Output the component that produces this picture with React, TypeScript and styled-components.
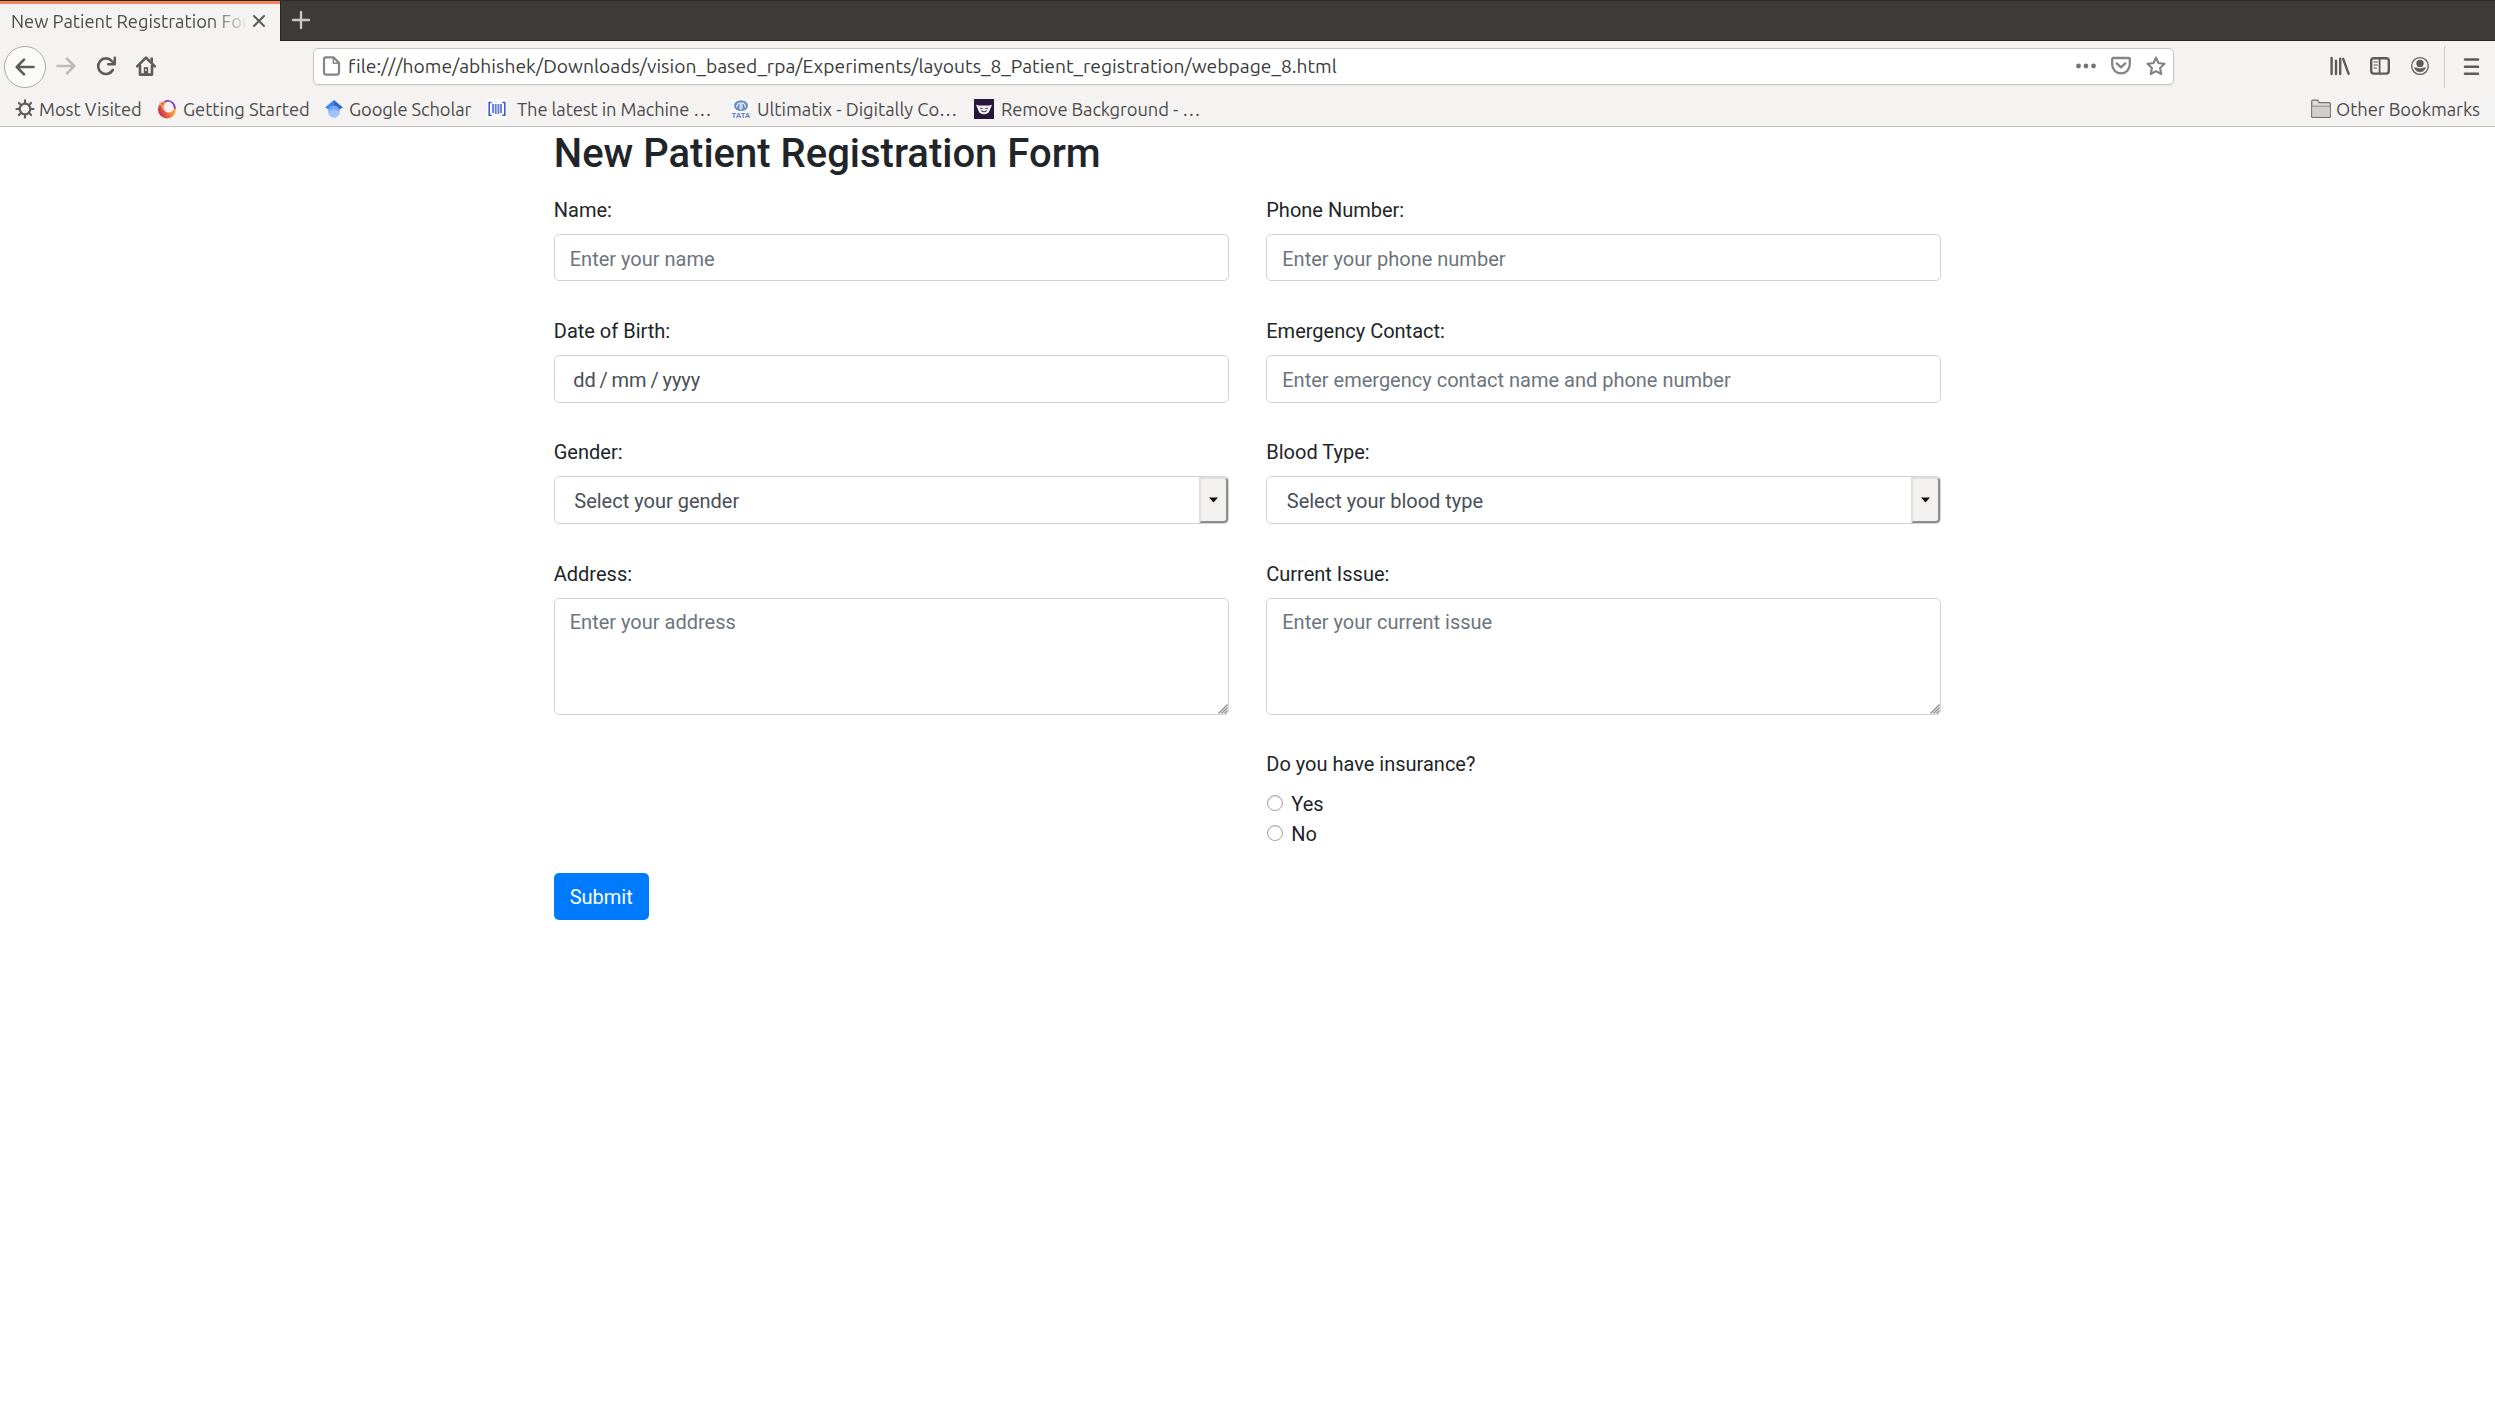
import React from "react";
import styled, { createGlobalStyle } from "styled-components";

const GlobalStyle = createGlobalStyle`
  *, *::before, *::after { box-sizing: border-box; }
  body { margin: 0; background: #fff; color: #212529; font-family: Roboto, sans-serif; font-size: 20px; line-height: 30px; }
`;

const Chrome = styled.header`
  height: 127px;
  display: flex;
  flex-direction: column;
  background: #f4f3f2;
  border-bottom: 1px solid #c6c2be;
  font-family: Ubuntu, "Noto Sans", sans-serif;
  font-size: 18.33px;
  line-height: 24px;
  color: #4c4c4c;
  white-space: nowrap;
`;
const TabStrip = styled.div`
  height: 41px;
  flex: none;
  display: flex;
  background: #3c3b37;
  border-top: 1px solid #2b2a27;
`;
const Tab = styled.div`
  width: 280px;
  display: flex;
  align-items: center;
  padding: 0 14px 4px 11px;
  border-top: 3px solid #f4835d;
  background: #f4f3f2;
`;
const TabTitle = styled.span`
  width: 235px;
  overflow: hidden;
  mask-image: linear-gradient(to right, #000 200px, transparent 237px);
`;
const TabRest = styled.div`
  flex: 1;
  display: flex;
  align-items: center;
  padding: 0 0 1px 10px;
  border-left: 1px solid #262522;
  border-bottom: 1px solid #262522;
`;
const NavBar = styled.div`
  height: 51px;
  flex: none;
  display: flex;
  align-items: center;
  padding: 0 15px 0 4px;
`;
const BackButton = styled.div`
  width: 42px;
  height: 42px;
  margin-right: 10px;
  display: flex;
  align-items: center;
  justify-content: center;
  border: 1px solid #adaba8;
  border-radius: 50%;
  background: #fafaf9;
`;
const NavIcon = styled.div<{ $gap?: number }>`
  display: flex;
  width: 20px;
  height: 20px;
  flex: none;
  margin: 0 ${(p) => p.$gap ?? 0}px 1px 0;
`;
const UrlBar = styled.div`
  width: 1861px;
  height: 37px;
  display: flex;
  align-items: center;
  padding: 0 7px 0 8px;
  border: 1px solid #c8c4c0;
  border-radius: 5px;
  background: #fff;
  box-shadow: 0 1px 2px rgba(0, 0, 0, 0.06);
`;
const UrlText = styled.span`
  flex: 1;
  padding-bottom: 1px;
  font-size: 19.25px;
  line-height: 26px;
  letter-spacing: 0.018px;
  color: #3b3b3b;
  margin-left: 6px;
`;
const Divider = styled.div`
  width: 1px;
  height: 42px;
  background: #cfccc9;
  margin-right: 18px;
`;
const Bookmarks = styled.div`
  height: 34px;
  display: flex;
  align-items: center;
  padding: 0 15px;
`;
const Bookmark = styled.div<{ $width: number; $gap: number; $spacing: number }>`
  width: ${(p) => p.$width}px;
  display: flex;
  align-items: center;
  gap: ${(p) => p.$gap}px;
  letter-spacing: ${(p) => p.$spacing}px;
  flex: none;
  svg { flex: none; }
`;
const Spacer = styled.div`flex: 1;`;

const Container = styled.main`
  width: 1425px;
  margin: 0 auto;
  padding: 3px 18.75px 0;
`;
const Title = styled.h2`
  margin: 0 0 15.8px;
  font-size: 40px;
  font-weight: 500;
  line-height: 48px;
`;
const Columns = styled.div`
  display: grid;
  grid-template-columns: 1fr 1fr;
  column-gap: 37.5px;
`;
const Field = styled.div`
  margin-bottom: 33.75px;
`;
const Label = styled.label`
  display: block;
  height: 30px;
  padding-top: 1px;
  margin-bottom: 10px;
`;
const Question = styled.div`
  height: 30px;
  margin-bottom: 10px;
`;
const Control = styled.div<{ $inset?: number }>`
  height: 47.5px;
  display: flex;
  align-items: center;
  padding: 2px 0 0 ${(p) => p.$inset ?? 15}px;
  border: 1px solid #ced4da;
  border-radius: 5px;
  color: #495057;
`;
const TextInput = styled.input`
  width: 675px;
  height: 47.5px;
  display: block;
  margin: 0;
  padding: 2.5px 15px 0;
  border: 1px solid #ced4da;
  border-radius: 5px;
  font: inherit;
  outline: none;
  &::placeholder { color: #6c757d; opacity: 1; }
`;
const AreaWrap = styled.div`
  position: relative;
  height: 117.5px;
`;
const Area = styled.textarea`
  width: 675px;
  height: 117.5px;
  display: block;
  margin: 0;
  padding: 8.5px 15px;
  border: 1px solid #ced4da;
  border-radius: 5px;
  font: inherit;
  resize: none;
  outline: none;
  &::placeholder { color: #6c757d; opacity: 1; }
`;
const Grip = styled.svg`
  position: absolute;
  right: 1px;
  bottom: 1px;
`;
const DateText = styled.span`word-spacing: -1.2px;`;
const SelectText = styled.span`flex: 1;`;
const SelectButton = styled.div`
  width: 29px;
  height: 46px;
  margin-top: -2px;
  display: flex;
  align-items: center;
  justify-content: center;
  background: #f2f1f0;
  border: 2px solid;
  border-color: #dfdfde #8f8f8e #8f8f8e #dfdfde;
  border-radius: 0 4px 4px 0;
`;
const RadioRow = styled.label`
  height: 30px;
  display: flex;
  align-items: center;
`;
const RadioMark = styled.span`
  width: 16px;
  height: 16px;
  margin: 0 8px 2px 1px;
  border: 1px solid #a3a3a3;
  border-radius: 50%;
  box-shadow: inset 0 1px 1px rgba(0, 0, 0, 0.12);
`;
const Submit = styled.button`
  width: 95px;
  height: 47px;
  margin: 24px 0 0;
  padding: 2px 0 0;
  display: block;
  border: 0;
  border-radius: 5px;
  background: #007bff;
  color: #fff;
  font: inherit;
`;

const DARK = "#5c5c5b";
const SOFT = "#858585";
const line = (color: string, w = 2.6) => ({
  fill: "none", stroke: color, strokeWidth: w, strokeLinecap: "round" as const, strokeLinejoin: "round" as const,
});

function TextField({ label, hint }: { label: string; hint: string }) {
  return <Field><Label>{label}</Label><TextInput placeholder={hint} /></Field>;
}
function SelectField({ label, value }: { label: string; value: string }) {
  return (
    <Field>
      <Label>{label}</Label>
      <Control $inset={19.5}>
        <SelectText>{value}</SelectText>
        <SelectButton>
          <svg width="9" height="6" viewBox="0 0 9 6"><path d="M0 0.5H9L4.5 5.5Z" fill="#111" /></svg>
        </SelectButton>
      </Control>
    </Field>
  );
}
function AreaField({ label, hint }: { label: string; hint: string }) {
  return (
    <Field>
      <Label>{label}</Label>
      <AreaWrap>
        <Area placeholder={hint} />
        <Grip width="10" height="10" viewBox="0 0 10 10">
          <path d="M0.5 9.5 9.5 0.5M3.5 9.5 9.5 3.5M6.5 9.5 9.5 6.5" stroke="#8a8a8a" strokeWidth="1.3" />
        </Grip>
      </AreaWrap>
    </Field>
  );
}

function BrowserChrome() {
  return (
    <Chrome>
      <TabStrip>
        <Tab>
          <TabTitle>New Patient Registration Form</TabTitle>
          <Spacer />
          <svg width="14" height="14" viewBox="0 0 14 14"><path d="M2 2 12 12M12 2 2 12" {...line("#5c5c5b", 2)} /></svg>
        </Tab>
        <TabRest>
          <svg width="20" height="20" viewBox="0 0 20 20"><path d="M10 2V18M2 10H18" {...line("#cac6c1", 2.4)} /></svg>
        </TabRest>
      </TabStrip>
      <NavBar>
        <BackButton>
          <svg width="20" height="20" viewBox="0 0 20 20"><path d="M18.5 10H2M9 2.7 1.8 10 9 17.3" {...line(DARK)} /></svg>
        </BackButton>
        <NavIcon $gap={20}>
          <svg width="20" height="20" viewBox="0 0 20 20"><path d="M1.5 10H18M11 2.7 18.2 10 11 17.3" {...line("#bcbbba")} /></svg>
        </NavIcon>
        <NavIcon $gap={20}>
          <svg width="20" height="20" viewBox="0 0 20 20">
            <path d="M16.8 14A7.8 7.8 0 1 1 15.6 4.8" {...line(DARK)} />
            <path d="M18.8 1.6V8.2H12.2" {...line(DARK, 2.4)} />
            <path d="M18.8 3.2V8.2H13.8Z" fill={DARK} />
          </svg>
        </NavIcon>
        <NavIcon $gap={157}>
          <svg width="20" height="20" viewBox="0 0 20 20">
            <path d="M1.2 10.4 10 1.6 18.8 10.4" {...line(DARK)} />
            <path d="M4 9.5V18.6H16V9.5" {...line(DARK)} />
            <path d="M14.4 1.6H17V7L14.4 4.6Z" fill={DARK} />
            <path d="M7.8 18V11.2H12.2V18Z" fill={DARK} />
            <circle cx="10" cy="14" r="0.9" fill="#f4f3f2" />
          </svg>
        </NavIcon>
        <UrlBar>
          <NavIcon>
            <svg width="20" height="20" viewBox="0 0 20 20">
              <path d="M4 1.4H11.5L17 6.9V16.6Q17 18.6 15 18.6H4Q2 18.6 2 16.6V3.4Q2 1.4 4 1.4Z" {...line(SOFT, 2.2)} />
              <path d="M11.3 2V7.2H16.6" {...line(SOFT, 1.4)} />
            </svg>
          </NavIcon>
          <UrlText>file:///home/abhishek/Downloads/vision_based_rpa/Experiments/layouts_8_Patient_registration/webpage_8.html</UrlText>
          <NavIcon $gap={15}>
            <svg width="20" height="20" viewBox="0 0 20 20"><g fill="#757575"><circle cx="2.5" cy="10" r="2.4" /><circle cx="10" cy="10" r="2.4" /><circle cx="17.5" cy="10" r="2.4" /></g></svg>
          </NavIcon>
          <NavIcon $gap={15}>
            <svg width="20" height="20" viewBox="0 0 20 20">
              <path d="M2.2 2H17.8Q18.8 2 18.8 3V8.6A8.8 8.8 0 0 1 1.2 8.6V3Q1.2 2 2.2 2Z" {...line(SOFT, 2.3)} />
              <path d="M5.8 7.4 10 11.4 14.2 7.4" {...line(SOFT, 2.4)} />
            </svg>
          </NavIcon>
          <NavIcon>
            <svg width="20" height="20" viewBox="0 0 20 20">
              <path d="M10 1.6 12.5 7 18.5 7.8 14.1 12 15.2 18 10 15.1 4.8 18 5.9 12 1.5 7.8 7.5 7Z" {...line(SOFT, 2.2)} />
            </svg>
          </NavIcon>
        </UrlBar>
        <Spacer />
        <NavIcon $gap={20}>
          <svg width="20" height="20" viewBox="0 0 20 20"><path d="M1.6 2V18M6 4.6V18M10.2 2.8V18M13.2 2.8 18.6 17.8" {...line(DARK, 2.4)} /></svg>
        </NavIcon>
        <NavIcon $gap={20}>
          <svg width="20" height="20" viewBox="0 0 20 20">
            <rect x="1.2" y="2.2" width="17.6" height="15.4" rx="2.6" {...line(DARK, 2.4)} />
            <path d="M9.6 2V17.6" {...line(DARK, 1.8)} />
            <path d="M4 6H7.4M4 9H7.4M4 12H6.4" {...line(DARK, 1.2)} />
          </svg>
        </NavIcon>
        <NavIcon $gap={14}>
          <svg width="20" height="20" viewBox="0 0 20 20">
            <circle cx="10" cy="10" r="8.4" {...line(DARK, 1.3)} />
            <circle cx="10" cy="7.4" r="3.7" fill={DARK} />
            <path d="M4.6 11.6Q10 14.2 15.4 11.6A5.6 5.6 0 0 1 4.6 11.6Z" fill={DARK} stroke={DARK} strokeWidth="0.8" />
          </svg>
        </NavIcon>
        <Divider />
        <svg width="17" height="20" viewBox="0 0 17 20"><path d="M2 2.6H15M2 9.7H15M2 16.8H15" {...line(DARK, 2.5)} /></svg>
      </NavBar>
      <Bookmarks>
        <Bookmark $width={142} $gap={4} $spacing={-0.03}>
          <svg width="20" height="20" viewBox="0 0 20 20">
            <circle cx="10" cy="10" r="5.3" {...line(DARK, 2.2)} />
            <path d="M10 1.4V4M10 16V18.6M1.4 10H4M16 10H18.6M3.9 3.9 5.7 5.7M14.3 14.3 16.1 16.1M3.9 16.1 5.7 14.3M14.3 5.7 16.1 3.9" {...line(DARK, 2.1)} />
          </svg>
          Most Visited
        </Bookmark>
        <Bookmark $width={167} $gap={6} $spacing={-0.05}>
          <svg width="20" height="20" viewBox="0 0 20 20">
            <defs>
              <linearGradient id="fox" x1="1" y1="0.2" x2="0" y2="0.7">
                <stop offset="0" stopColor="#ffd64a" /><stop offset="0.45" stopColor="#f58a3a" /><stop offset="1" stopColor="#c8204e" />
              </linearGradient>
            </defs>
            <circle cx="10" cy="10.4" r="9" fill="url(#fox)" />
            <circle cx="11.6" cy="8.2" r="5.4" fill="#f7f0f3" />
            <path d="M8.6 2A7.4 7.4 0 0 1 17.8 9.2" {...line("#8137dc", 1.7)} />
            <path d="M3 4.4Q6 7 6.4 10.5" {...line("#f0a060", 1.5)} />
          </svg>
          Getting Started
        </Bookmark>
        <Bookmark $width={163} $gap={5} $spacing={-0.1}>
          <svg width="20" height="20" viewBox="0 0 20 20">
            <circle cx="10" cy="12.8" r="6" fill="#a0c3ff" />
            <path d="M10 1 1 8.4 5.2 10.8A5.4 5.4 0 0 1 10 8.4Z" fill="#4285f4" />
            <path d="M10 1 19 8.4 14.8 10.8A5.4 5.4 0 0 0 10 8.4Z" fill="#356ac3" />
            <path d="M4.6 10.2A6 6 0 0 1 15.4 10.2L14.6 12.2A6.8 6.8 0 0 0 5.4 12.2Z" fill="#76a7fa" />
          </svg>
          Google Scholar
        </Bookmark>
        <Bookmark $width={244} $gap={10} $spacing={-0.1}>
          <svg width="20" height="20" viewBox="0 0 20 20">
            <rect width="20" height="20" fill="#fcfcfd" />
            <path d="M4.6 3.6H2.2V16.2H4.6M15.4 3.6H17.8V16.2H15.4" fill="none" stroke="#2f55d4" strokeWidth="1.5" />
            <path d="M6 5V14M8.7 5V15M11.4 5V15M14 5V14" stroke="#5f79d8" strokeWidth="1.8" />
          </svg>
          The latest in Machine …
        </Bookmark>
        <Bookmark $width={243} $gap={6} $spacing={-0.01}>
          <svg width="20" height="20" viewBox="0 0 20 20">
            <rect width="20" height="20" fill="#f8f9fb" />
            <ellipse cx="10" cy="6.6" rx="7" ry="5.4" fill="#6d8dc4" />
            <path d="M5.6 8.4Q6 4 9.2 4V10.6M14.4 8.4Q14 4 10.8 4V10.6" fill="none" stroke="#eef2f9" strokeWidth="1.2" />
            <text x="0.6" y="19" fontSize="7.4" fontWeight="700" fill="#5f7fb8" fontFamily="Liberation Sans, sans-serif" textLength="18.8" lengthAdjust="spacingAndGlyphs">TATA</text>
          </svg>
          Ultimatix - Digitally Co…
        </Bookmark>
        <Bookmark $width={240} $gap={7} $spacing={-0.1}>
          <svg width="20" height="20" viewBox="0 0 20 20">
            <rect width="20" height="20" fill="#26163a" />
            <path d="M2 5.8 5 6.6H15L18 5.8 15.6 11.4Q14.6 15.2 10 15.2T4.4 11.4Z" fill="#f4f2f7" />
            <path d="M6.6 9.4H8.2M11.8 9.4H13.4M7.4 12Q10 14 12.6 12" {...line("#26163a", 0.9)} />
          </svg>
          Remove Background - …
        </Bookmark>
        <Spacer />
        <Bookmark $width={169} $gap={5} $spacing={-0.06}>
          <svg width="20" height="20" viewBox="0 0 20 20">
            <path d="M0.7 18V2.4Q0.7 1.2 1.8 1.2H6.6L8.2 3.6H18.2Q19.3 3.6 19.3 4.8V18Q19.3 18.3 18.8 18.3H1.2Q0.7 18.3 0.7 18Z" fill="#dedddc" stroke="#6f6f6e" strokeWidth="1.2" />
            <path d="M1 7.2H19" stroke="#858584" strokeWidth="1.1" />
            <path d="M1.4 7.8H18.6V17.6H1.4Z" fill="#d0cfce" />
          </svg>
          Other Bookmarks
        </Bookmark>
      </Bookmarks>
    </Chrome>
  );
}

export default function App() {
  return (
    <>
      <GlobalStyle />
      <BrowserChrome />
      <Container>
        <Title>New Patient Registration Form</Title>
        <Columns>
          <div>
            <TextField label="Name:" hint="Enter your name" />
            <Field>
              <Label>Date of Birth:</Label>
              <Control $inset={18.5}><DateText>dd / mm / yyyy</DateText></Control>
            </Field>
            <SelectField label="Gender:" value="Select your gender" />
            <AreaField label="Address:" hint="Enter your address" />
          </div>
          <div>
            <TextField label="Phone Number:" hint="Enter your phone number" />
            <TextField label="Emergency Contact:" hint="Enter emergency contact name and phone number" />
            <SelectField label="Blood Type:" value="Select your blood type" />
            <AreaField label="Current Issue:" hint="Enter your current issue" />
            <Question>Do you have insurance?</Question>
            <RadioRow><RadioMark />Yes</RadioRow>
            <RadioRow><RadioMark />No</RadioRow>
          </div>
        </Columns>
        <Submit type="button">Submit</Submit>
      </Container>
    </>
  );
}
